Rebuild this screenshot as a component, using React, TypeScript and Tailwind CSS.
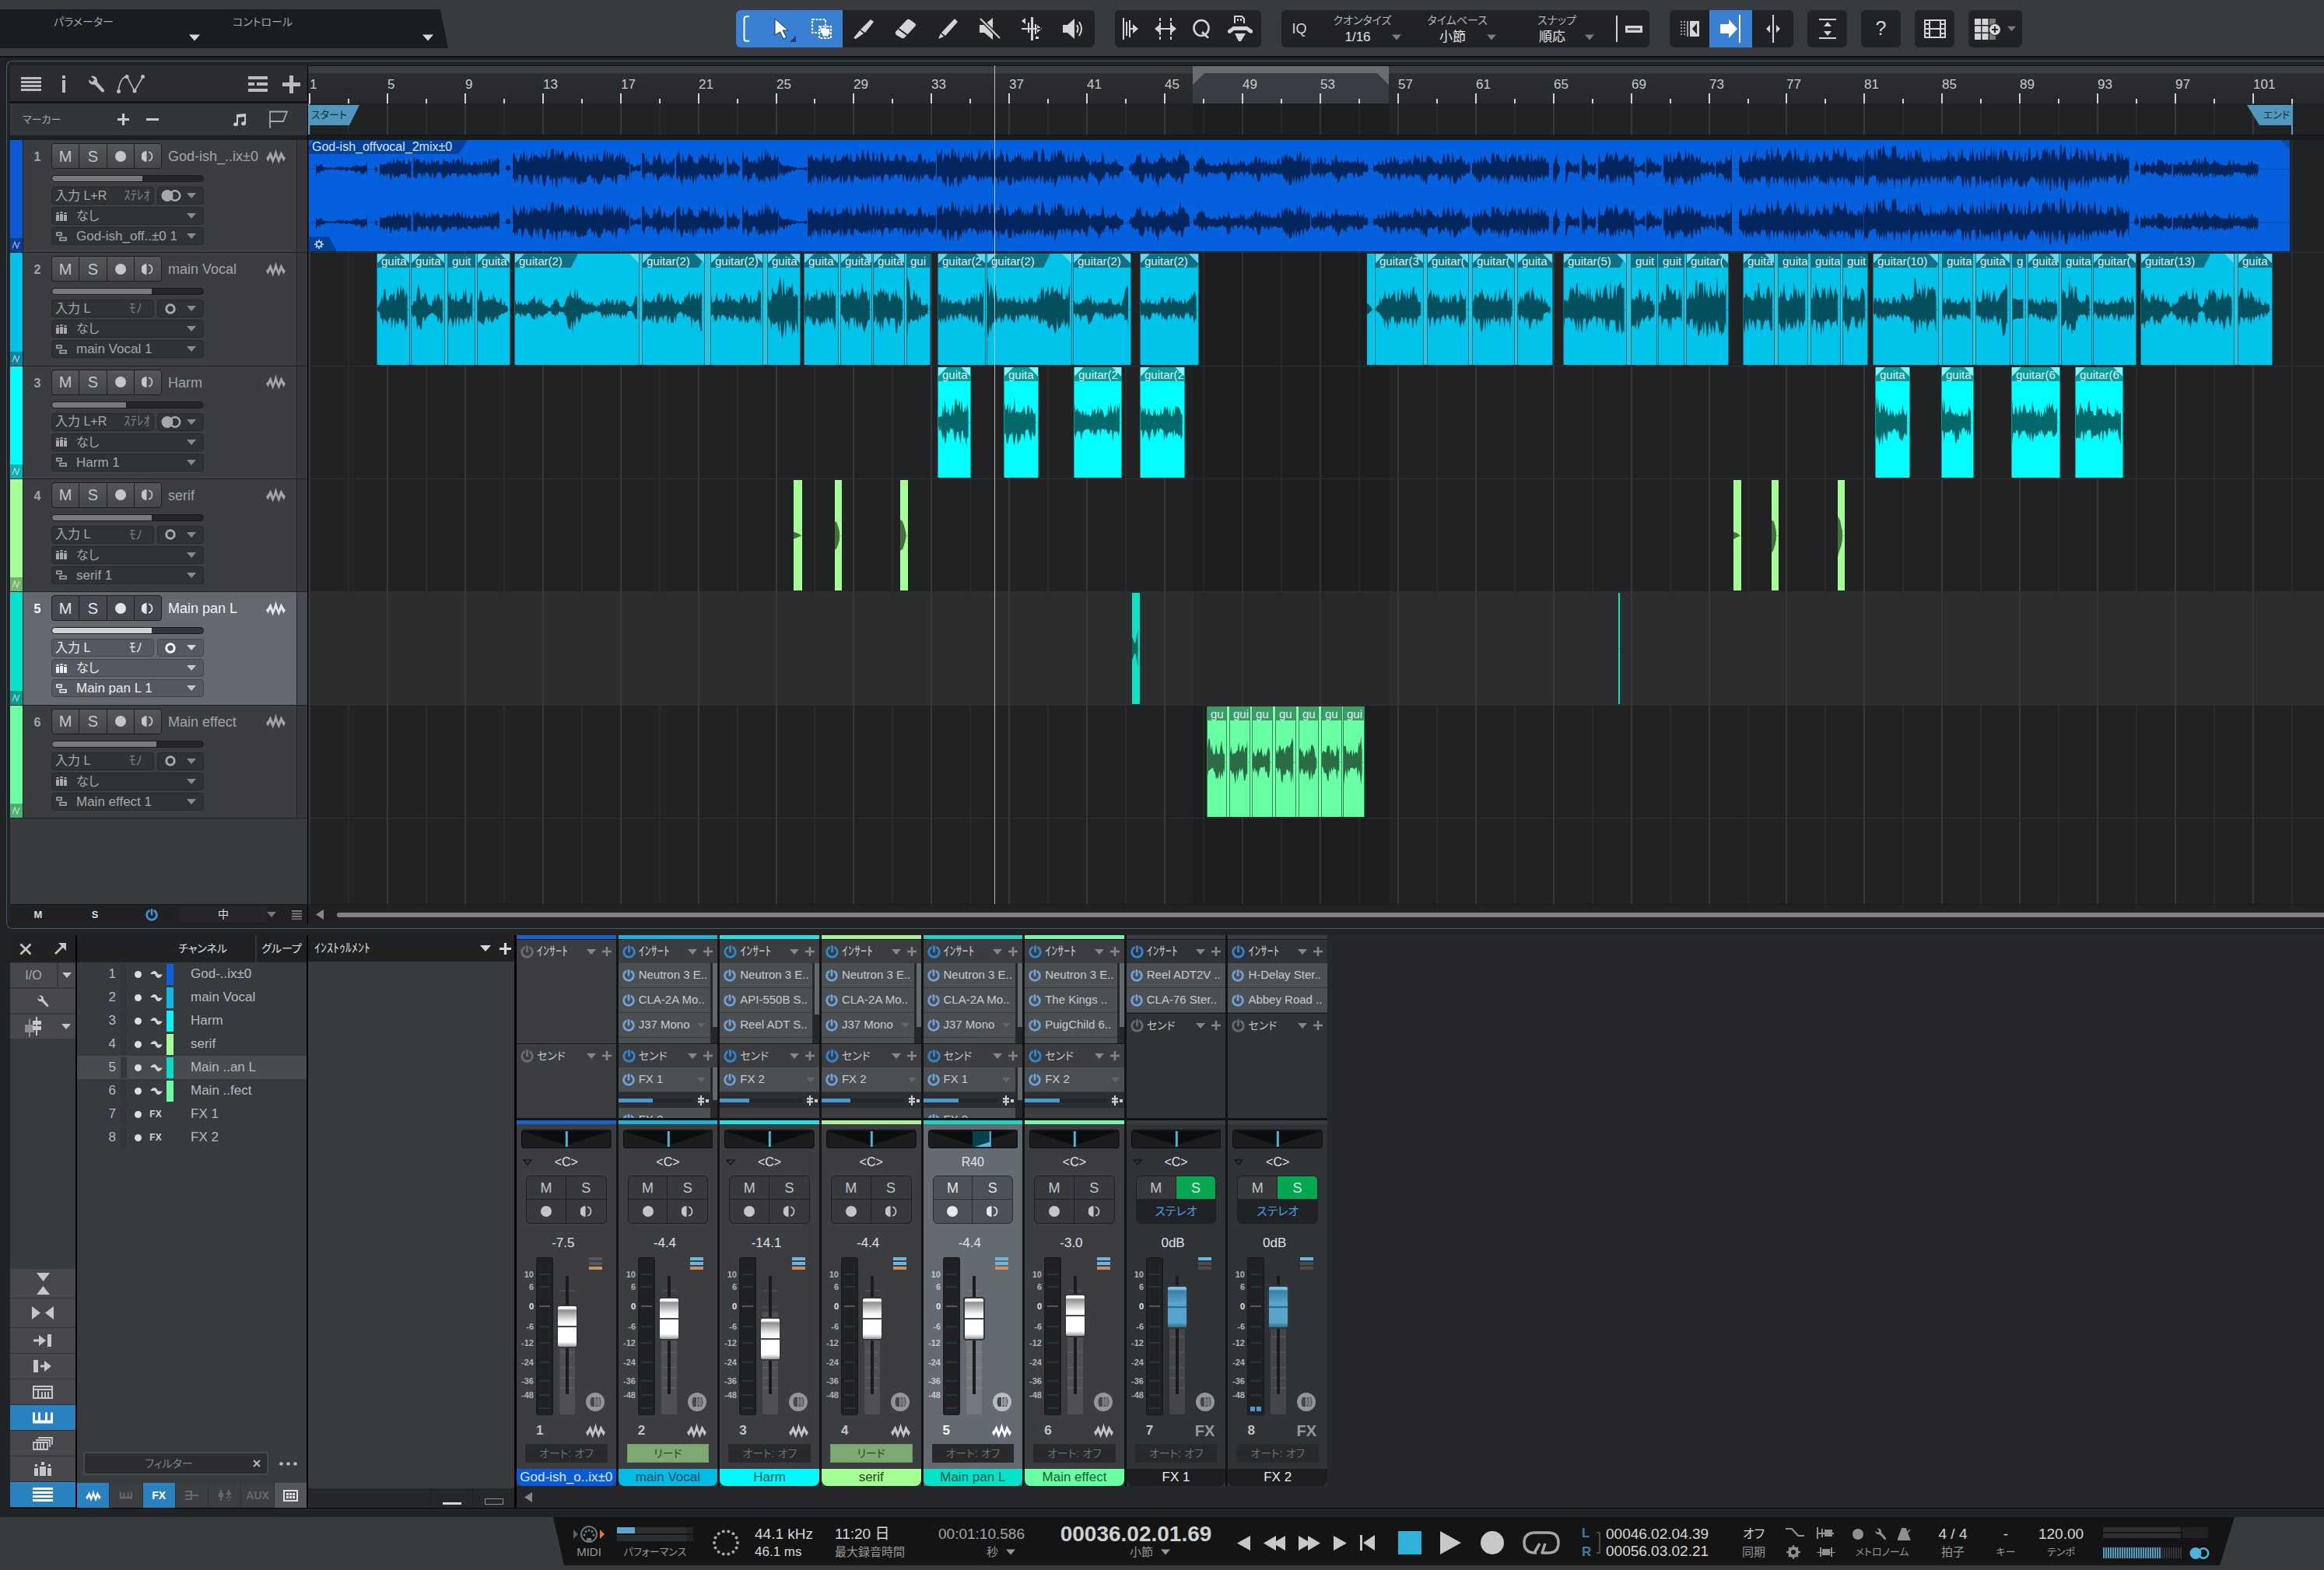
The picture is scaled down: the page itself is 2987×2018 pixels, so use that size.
import React from "react";

/* ---------- shared drawing helpers ---------- */

type IconProps = { w?: number; h?: number; box?: string; className?: string; children: React.ReactNode };

function Svg({ w = 24, h = 24, box, className = "", children }: IconProps) {
  return (
    <svg width={w} height={h} viewBox={box ?? `0 0 ${w} ${h}`} className={`shrink-0 ${className}`} fill="currentColor" aria-hidden="true">
      {children}
    </svg>
  );
}

const Down = ({ w = 14, h = 8, className = "" }: { w?: number; h?: number; className?: string }) => (
  <Svg w={w} h={h} box="0 0 14 8" className={className}>
    <path d="M0 0h14L7 8z" />
  </Svg>
);

const LeftArrow = ({ className = "" }: { className?: string }) => (
  <Svg w={10} h={13} className={className}>
    <path d="M10 0v13L0 6.500z" />
  </Svg>
);

const Plus = ({ s = 14, className = "" }: { s?: number; className?: string }) => (
  <Svg w={s} h={s} box="0 0 14 14" className={className}>
    <path d="M5.500 0h3v5.500H14v3H8.500V14h-3V8.500H0v-3h5.500z" />
  </Svg>
);

const Power = ({ s = 18, className = "" }: { s?: number; className?: string }) => (
  <Svg w={s} h={s} box="0 0 18 18" className={className}>
    <path d="M5 3a7.200 7.200 0 1 0 8 0" fill="none" stroke="currentColor" strokeWidth="3" strokeLinecap="round" />
    <path d="M9 1.500v7" fill="none" stroke="currentColor" strokeWidth="3" strokeLinecap="round" />
  </Svg>
);

const WaveIcon = ({ className = "" }: { className?: string }) => (
  <Svg w={25} h={20} box="0 0 26 20" className={className}>
    <path d="M0 12L2.500 9.500 6 3l3.500 9L13 0l3.500 12L20 3l3.500 6.500L26 12l-2.500 5L20.500 11 17 20 13 10 9 20 5.500 11l-3 6z" />
  </Svg>
);

const Monitor = ({ className = "" }: { className?: string }) => (
  <Svg w={15} h={14} className={className}>
    <path d="M6.500 0v14A7 7 0 0 1 6.500 0z" />
    <path d="M9 1.200a6 6 0 0 1 0 11.600" fill="none" stroke="currentColor" strokeWidth="1.700" />
  </Svg>
);

const Dot = ({ s = 14, className = "" }: { s?: number; className?: string }) => (
  <Svg w={s} h={s} box="0 0 14 14" className={className}>
    <circle cx="7" cy="7" r="7" />
  </Svg>
);

const Wrench = ({ s = 24, className = "" }: { s?: number; className?: string }) => (
  <Svg w={s} h={s} box="0 0 24 24" className={className}>
    <path d="M5 1c4-1 8 1 8.500 5 .2 1.500-.1 2.500.5 3.500l8.500 9.500c1.500 2-1 4.500-3 3L11 13c-1-.8-2-.6-3.500-.8C4 11.800 1.500 9 2.500 5.500L6.500 9 10 5.500z" />
  </Svg>
);

const Keys = ({ w = 26, h = 14, className = "" }: { w?: number; h?: number; className?: string }) => (
  <Svg w={w} h={h} box="0 0 26 14" className={className}>
    <path d="M0 0h3v10h4V0h3v10h6V0h3v10h4V0h3v14H0z" />
  </Svg>
);

const StereoRings = ({ className = "" }: { className?: string }) => (
  <Svg w={26} h={15} className={className}>
    <circle cx="8" cy="7.500" r="7.500" />
    <circle cx="18" cy="7.500" r="6.200" fill="none" stroke="currentColor" strokeWidth="2.600" />
  </Svg>
);

const MonoRing = ({ className = "" }: { className?: string }) => (
  <Svg w={14} h={14} className={className}>
    <circle cx="7" cy="7" r="5.200" fill="none" stroke="currentColor" strokeWidth="3" />
  </Svg>
);

/* ---------- wave forms ---------- */

function makeRandom(seed: number) {
  let s = (seed * 2654435761) % 4294967296;
  return () => {
    s = (s * 1664525 + 1013904223) % 4294967296;
    return s / 4294967296;
  };
}

/* Builds a closed outline from an envelope of half heights. */
function wavePath(x0: number, x1: number, env: number[], mid: number, seed: number, rough = 0.5) {
  const rnd = makeRandom(seed + 11);
  const top: string[] = [];
  const bottom: string[] = [];
  for (let x = x0; x <= x1; x += 1.5) {
    const t = ((x - x0) / Math.max(1, x1 - x0)) * (env.length - 1);
    const i = Math.min(env.length - 2, Math.floor(t));
    const a = env[i] + (env[i + 1] - env[i]) * (t - i);
    const up = a * (1 - rough + rough * Math.pow(rnd(), 1.6) * 1.7);
    const dn = a * (1 - rough + rough * Math.pow(rnd(), 1.6) * 1.5);
    top.push(`${x.toFixed(1)} ${(mid - up).toFixed(1)}`);
    bottom.unshift(`${x.toFixed(1)} ${(mid + dn).toFixed(1)}`);
  }
  return `M${top.join("L")}L${bottom.join("L")}Z`;
}

/* ---------- timeline data ---------- */

const ORIGIN = 396;
const BAR = 25;
const barX = (bar: number) => 1 + ((bar - 1) * BAR * 2498) / 2500;

type Clip = { a: number; b: number; label?: string; env: number[]; join?: boolean };
const c = (a: number, b: number, label: string, env: number[], join = false): Clip => ({ a, b, label, env, join });

const vocal: Clip[] = [
  c(484, 527, "guita", [1, 26, 20, 24, 22], true),
  c(528, 572, "guita", [4, 26, 20, 6, 18, 20], true),
  c(575, 611, "guit", [24, 20, 18, 28, 16, 20], true),
  c(613, 656, "guita", [16, 22, 18, 20, 12, 2]),
  c(661, 822, "guitar(2)", [12, 11, 10, 13, 12, 2, 12, 3, 30, 22, 10, 9, 3, 12, 10, 9, 12, 3, 15], true),
  c(825, 906, "guitar(2)", [20, 15, 18, 14, 20, 6, 18, 26, 24], true),
  c(913, 981, "guitar(2)", [16, 17, 16, 14, 18, 17, 20], true),
  c(986, 1029, "guita", [16, 28, 32, 30, 31]),
  c(1033, 1078, "guita", [18, 20, 24, 20, 28], true),
  c(1080, 1121, "guita", [14, 22, 21, 26, 20], true),
  c(1122, 1163, "guita", [14, 26, 20, 28, 18], true),
  c(1165, 1196, "gui", [34, 22, 16, 10, 7]),
  c(1205, 1267, "guitar(2", [16, 14, 13, 10, 16, 22], true),
  c(1268, 1378, "guitar(2)", [32, 22, 12, 16, 14, 13, 24, 26, 27, 26], true),
  c(1379, 1454, "guitar(2)", [8, 15, 16, 6, 14, 12, 8, 30]),
  c(1465, 1541, "guitar(2)", [9, 15, 9, 14, 12, 14, 8, 24]),
  c(1757, 1766, "", [8, 1], true),
  c(1767, 1830, "guitar(3", [1, 24, 20, 22, 24, 18], true),
  c(1834, 1888, "guitar(", [24, 18, 15, 18, 24], true),
  c(1892, 1947, "guitar(", [16, 25, 16, 24, 20], true),
  c(1950, 1996, "guita", [12, 20, 24, 14, 4]),
  c(2009, 2091, "guitar(5)", [20, 24, 26, 20, 26, 30, 27], true),
  c(2096, 2130, "guit", [22, 26, 14, 18, 6], true),
  c(2131, 2165, "guit", [13, 24, 26, 18, 24], true),
  c(2167, 2222, "guitar(", [24, 28, 32, 32, 32]),
  c(2240, 2281, "guita", [28, 24, 26, 22], true),
  c(2285, 2324, "guita", [30, 22, 27, 24], true),
  c(2327, 2366, "guita", [26, 30, 24, 28], true),
  c(2368, 2401, "guit", [30, 20, 22, 24]),
  c(2407, 2492, "guitar(10)", [10, 14, 13, 16, 32, 26, 28], true),
  c(2496, 2536, "guita", [12, 14, 11, 15], true),
  c(2539, 2584, "guita", [14, 22, 16, 24, 34], true),
  c(2586, 2604, "g", [14, 12, 14], true),
  c(2606, 2647, "guita", [14, 11, 16, 12], true),
  c(2649, 2689, "guita", [24, 32, 14, 16], true),
  c(2690, 2746, "guitar(", [10, 14, 10, 14, 12, 15]),
  c(2751, 2872, "guitar(13)", [28, 15, 18, 17, 3, 20, 18, 24, 2, 24, 16, 23, 18], true),
  c(2876, 2921, "guita", [20, 22, 18, 10, 6]),
];

const harm: Clip[] = [
  c(1205, 1248, "guita", [6, 24, 12, 26, 22, 26]),
  c(1290, 1335, "guita", [22, 24, 27, 18, 26]),
  c(1380, 1442, "guitar(2", [20, 20, 14, 21, 12, 22, 20]),
  c(1465, 1523, "guitar(2", [18, 21, 14, 20, 16, 20]),
  c(2410, 2455, "guita", [28, 26, 20, 10, 20, 21]),
  c(2495, 2537, "guita", [24, 20, 22, 10, 20]),
  c(2585, 2648, "guitar(6", [22, 18, 22, 12, 22, 18]),
  c(2667, 2729, "guitar(6", [18, 22, 20, 22, 12, 24]),
];

const serif: Clip[] = [
  c(1020, 1031, "", [5, 3, 1]),
  c(1073, 1082, "", [20, 16, 1]),
  c(1157, 1167, "", [22, 18, 1]),
  c(2228, 2238, "", [5, 3, 1]),
  c(2277, 2286, "", [22, 17, 1]),
  c(2362, 2371, "", [28, 18, 1]),
];

const panL: Clip[] = [c(1455, 1465, "", [16, 4, 28]), c(2080, 2082, "", [1, 1])];

const effect: Clip[] = [
  c(1551, 1577, "gu", [26, 16, 22, 18], true),
  c(1580, 1607, "gui", [16, 24, 15, 28], true),
  c(1609, 1636, "gu", [12, 18, 10, 24], true),
  c(1639, 1666, "gu", [14, 22, 20, 28], true),
  c(1669, 1695, "gu", [20, 14, 22, 10], true),
  c(1698, 1725, "gu", [14, 22, 12, 26], true),
  c(1726, 1754, "gui", [26, 12, 16, 28]),
];

/* [start, end, envelope...] for the stereo backing track */
const backing: number[][] = [
  [406, 472, 8, 3, 1, 3, 2, 6, 8], [482, 486, 2, 5, 2], [488, 529, 11, 12, 10], [531, 642, 12, 10, 12, 9, 11],
  [650, 657, 2, 6, 1], [659, 810, 18, 17, 22, 17, 19, 16], [810, 824, 6, 3, 6], [825, 867, 20, 8, 18, 8, 18],
  [869, 931, 16, 18, 14, 18, 6], [934, 951, 18, 6, 14, 4], [954, 1001, 22, 12, 22, 14], [1001, 1022, 10, 7, 2],
  [1022, 1038, 2, 1, 3], [1038, 1204, 18, 16, 20, 15, 17, 14], [1204, 1381, 21, 18, 20, 17, 20, 18],
  [1381, 1445, 10, 20, 9, 20, 8, 18, 1], [1451, 1530, 3, 18, 10, 22, 8, 22, 3], [1534, 1600, 4, 13, 8, 6, 13, 7, 9],
  [1600, 1685, 5, 14, 8, 15, 20, 15], [1685, 1759, 9, 12, 9, 18, 8, 14, 3], [1765, 1890, 5, 14, 11, 17, 12, 18, 6],
  [1892, 1992, 16, 14, 18, 16, 18, 10], [1996, 2006, 16, 14, 2], [2012, 2030, 16, 4, 8], [2033, 2051, 18, 5, 8],
  [2054, 2101, 16, 18, 16, 20], [2101, 2115, 6, 3, 8], [2116, 2136, 16, 7, 5], [2138, 2186, 20, 18, 20, 16],
  [2186, 2205, 10, 7], [2205, 2226, 10, 13, 22], [2235, 2396, 18, 20, 22, 18, 21, 17], [2396, 2737, 20, 22, 18, 22, 20, 24, 20, 19],
  [2743, 2749, 3, 8, 3], [2751, 2792, 9, 7, 10, 6], [2793, 2903, 10, 9, 12, 9, 10, 9],
];

function BackingClip() {
  return (
    <button aria-label="God-ish_offvocal_2mix±0" className="absolute top-0 bottom-px left-px w-[2546px] overflow-hidden bg-[#0460dc] text-left">
      <svg className="absolute inset-0 h-full w-full" viewBox="0 0 2546 144" preserveAspectRatio="none" aria-hidden="true">
        {[37, 106].map((mid) => (
          <g key={mid} fill="#03265e">
            <path d={`M0 ${mid}h2546v1H0z`} opacity=".35" />
            {backing.map(([a, b, ...env], i) => (
              <path key={a} d={wavePath(a - 397, b - 397, env, mid, i + 3, 0.58)} />
            ))}
          </g>
        ))}
      </svg>
      <span className="absolute top-0 left-0 h-[18px] bg-[#04419a] pr-5 pl-1 text-[16px] leading-[18px] whitespace-nowrap text-[#d5e4f6] [clip-path:polygon(6px_0,100%_0,calc(100%-12px)_100%,0_100%,0_8px)]">
        God-ish_offvocal_2mix±0
      </span>
      <span className="absolute bottom-0 left-0 flex h-[19px] w-[36px] items-center bg-[#04419a] pl-[7px] text-[#c8daf2] [clip-path:polygon(0_0,26px_0,100%_100%,0_100%)]">
        <Svg w={12} h={12}>
          <circle cx="6" cy="6" r="3.200" fill="none" stroke="currentColor" strokeWidth="1.600" />
          <path d="M6 0v2M6 10v2M0 6h2M10 6h2M2 2l1.200 1.200M8.800 8.800L10 10M10 2L8.800 3.200M3.200 8.800L2 10" stroke="currentColor" strokeWidth="1.600" />
        </Svg>
      </span>
      <i className="absolute top-0 right-0 h-3 w-3 bg-[#0b4aa8] [clip-path:polygon(0_0,100%_0,100%_100%)]" />
    </button>
  );
}

type Theme = { body: string; wave: string; head: string; corner: string; edge: string; gap: string };

const themes: Record<string, Theme> = {
  vocal: { body: "bg-[#02c4ea]", wave: "#05505f", head: "bg-[#0c7186]", corner: "bg-[#66d6ee]", edge: "border-[#0a6e82]", gap: "bg-[#2cc3dd]" },
  harm: { body: "bg-[#02fefe]", wave: "#04696b", head: "bg-[#0a9a9c]", corner: "bg-[#7df6f6]", edge: "border-[#0a9a9c]", gap: "bg-[#02fefe]" },
  serif: { body: "bg-[#a5ff96]", wave: "#47703f", head: "bg-[#6aa960]", corner: "bg-[#c5ffba]", edge: "border-[#7fc872]", gap: "bg-[#a5ff96]" },
  pan: { body: "bg-[#0be3c6]", wave: "#0a6a60", head: "bg-[#0a9c8a]", corner: "bg-[#7af0e0]", edge: "border-[#0bbfa8]", gap: "bg-[#0be3c6]" },
  effect: { body: "bg-[#69ffa3]", wave: "#2b6c46", head: "bg-[#3f9a66]", corner: "bg-[#9dffc4]", edge: "border-[#2f8a56]", gap: "bg-[#7dffb2]" },
};

function Lane({ clips, theme, seed }: { clips: Clip[]; theme: Theme; seed: number }) {
  return (
    <>
      {clips.map((k, i) => {
        const w = k.b - k.a;
        const next = clips[i + 1];
        const mid = 72;
        const inset = k.label === "gu" || k.label === "gui" ? "pl-1" : "pl-[5px]";
        return (
          <React.Fragment key={k.a}>
            {k.join && next && (
              <div className={`absolute top-px bottom-px ${theme.gap}`} style={{ left: k.b - ORIGIN, width: next.a - k.b }} />
            )}
            <button
              aria-label={k.label || "clip"}
              className={`absolute top-px bottom-px overflow-hidden text-left ${w > 17 ? "border-x" : ""} ${theme.edge} ${theme.body}`}
              style={{ left: k.a - ORIGIN, width: w }}
            >
              <svg className="absolute inset-0 h-full w-full" viewBox={`0 0 ${w} 144`} preserveAspectRatio="none" aria-hidden="true">
                <path d={`M0 ${mid}h${w}v1H0z`} fill={theme.wave} opacity=".4" />
                <path d={wavePath(0, w - 2, k.env, mid, seed + i, w > 20 ? 0.55 : 0.1)} fill={theme.wave} />
              </svg>
              {k.label && (
                <>
                  <span
                    className={`absolute top-0 left-0 h-[18px] text-[15px] leading-[20px] whitespace-nowrap text-[#d9f4f5] ${inset} ${theme.head} ${w > 70 ? "pr-5 [clip-path:polygon(0_0,100%_0,calc(100%-9px)_100%,0_100%)]" : "w-full"}`}
                  >
                    {k.label}
                  </span>
                  {w > 40 && (
                    <>
                      <i className={`absolute top-0 left-0 h-3 w-3 ${theme.corner} [clip-path:polygon(0_0,100%_0,0_100%)]`} />
                      <i className={`absolute top-0 right-0 h-3 w-3 ${theme.corner} [clip-path:polygon(0_0,100%_0,100%_100%)]`} />
                    </>
                  )}
                </>
              )}
            </button>
          </React.Fragment>
        );
      })}
    </>
  );
}

/* ---------- top tool bar ---------- */

const toolBtn = "flex h-12 items-center justify-center";
const group = "flex h-12 items-center rounded-md bg-[#202225] text-[#d2d4d6]";

function ToolSelect({ label, value, className }: { label: string; value: string; className: string }) {
  return (
    <label className={`flex flex-col items-center ${className}`}>
      <span className="text-[14px] leading-[22px] text-[#b4b6b8]">{label}</span>
      <span className="flex w-full items-center">
        <select className="min-w-0 flex-1 appearance-none text-center text-[17px] leading-[22px] text-[#e4e5e6]" defaultValue={value}>
          <option className="bg-[#202225]">{value}</option>
        </select>
        <Down w={12} h={8} className="text-[#797c80]" />
      </span>
    </label>
  );
}

function TopBar() {
  return (
    <header className="flex h-[74px] shrink-0 items-start border-b-2 border-[#0e0f10] bg-[#373a3f]">
      <div className="mt-3 flex h-[50px] w-[576px] bg-[#191c20] text-[14px] text-[#a4a7ab] [clip-path:polygon(0_0,566px_0,100%_100%,0_100%)]">
        <button className="flex w-[264px] items-start justify-between pt-1.5 pr-[7px] pl-[69px]">
          <span>パラメーター</span>
          <Down w={14} h={9} className="mt-[26px] text-[#d6d8da]" />
        </button>
        <button className="flex w-[300px] items-start justify-between pt-1.5 pr-[7px] pl-[35px]">
          <span>コントロール</span>
          <Down w={14} h={9} className="mt-[26px] text-[#d6d8da]" />
        </button>
      </div>

      <div className="mt-[13px] ml-[370px] flex">
        <div className={`${group} overflow-hidden`}>
          <button aria-label="Arrow tool" className={`${toolBtn} w-[82px] justify-start gap-8 bg-[#3a80d2] pl-[9px] text-white`}>
            <Svg w={8} h={34}>
              <path d="M8 1.200H4.500Q1.500 1.200 1.500 4.500v25q0 3.300 3 3.300H8" fill="none" stroke="currentColor" strokeWidth="2" />
            </Svg>
            <Svg w={28} h={34}>
              <path d="M1 4l17 15h-7l5 9-4 2-4.500-9L1 25z" stroke="#1c2f4a" />
              <path d="M28 26v8h-8z" fill="#1d3f70" />
            </Svg>
          </button>
          <button aria-label="Range tool" className={`${toolBtn} w-[55px] bg-[#3a80d2] text-white`}>
            <Svg w={28} h={28}>
              <g fill="none" stroke="currentColor" strokeWidth="2" strokeDasharray="3 1.500">
                <path d="M2 2h17v17H2z" />
                <path d="M11 11h15v15H11z" />
              </g>
              <path d="M12 12l4 1.500L18 12l2 2h4v4l2 2-3 1-1 3-3-1-3 1-1-3-2-3z" />
            </Svg>
          </button>
          {toolIcons.map(([name, icon], i) => (
            <button key={i} aria-label={name} className={`${toolBtn} w-[54px]`}>
              {icon}
            </button>
          ))}
        </div>

        <div className={`${group} ml-[26px] w-[188px] justify-around`}>
          <button aria-label="Strip silence" className={toolBtn}>
            <Svg w={20} h={28}>
              <path d="M0 0h2v28H0zM4 5h2v18H4zM8 3h2v22H8zM10 13h3V8l7 6-7 6v-5h-3z" />
            </Svg>
          </button>
          <button aria-label="Stretch" className={toolBtn}>
            <Svg w={28} h={28}>
              <path d="M6 0h2v4H6zM6 6h2v16H6zM6 24h2v4H6zM20 0h2v4h-2zM20 6h2v16h-2zM20 24h2v4h-2zM0 14l6-5v4h16V9l6 5-6 5v-4H6v4z" />
            </Svg>
          </button>
          <button aria-label="Quantize" className={toolBtn}>
            <Svg w={24} h={26}>
              <ellipse cx="12" cy="12" rx="9.500" ry="10" fill="none" stroke="currentColor" strokeWidth="2.600" />
              <path d="M14 16l8 8-2 1.500-8-7z" />
            </Svg>
          </button>
          <button aria-label="Humanize" className={toolBtn}>
            <Svg w={34} h={34}>
              <path d="M10 10V1h9l3 3v6M14 4v3M18 4v3" fill="none" stroke="currentColor" strokeWidth="2" />
              <path d="M1 22v-3l7-5h18l7 5v3l-3 1-5-4H9l-5 4zM10 23h14l-6 10h-3z" />
            </Svg>
          </button>
        </div>

        <div className={`${group} ml-[26px] w-[473px]`}>
          <button className="w-[46px] text-center text-[18px]">IQ</button>
          <ToolSelect label="クオンタイズ" value="1/16" className="ml-2 w-[100px]" />
          <ToolSelect label="タイムベース" value="小節" className="ml-[22px] w-[100px]" />
          <ToolSelect label="スナップ" value="順応" className="ml-[30px] w-[96px]" />
          <button aria-label="Autoscroll" className={`${toolBtn} ml-7 gap-2.5`}>
            <i className="h-[34px] w-0.5 bg-[#d2d4d6]" />
            <Svg w={22} h={9}>
              <path d="M1.500 1.500h19v6h-19z" fill="#55585c" stroke="currentColor" strokeWidth="3" />
            </Svg>
          </button>
        </div>

        <div className={`${group} ml-[26px] overflow-hidden`}>
          <button aria-label="Return to start" className={`${toolBtn} w-[51px]`}>
            <Svg w={24} h={20}>
              <path d="M0 0h2v2H0zM0 4h2v2H0zM0 8h2v2H0zM0 12h2v2H0zM0 16h2v2H0zM4 0h2v2H4zM4 4h2v2H4zM4 8h2v2H4zM4 12h2v2H4zM4 16h2v2H4zM8 0h2v20H8z" opacity=".7" />
              <path fillRule="evenodd" d="M12 0h12v20H12zm9 3l-6 7 6 7z" />
            </Svg>
          </button>
          <button aria-label="Follow cursor" className={`${toolBtn} w-[55px] bg-[#3a80d2] text-white`}>
            <Svg w={28} h={36}>
              <path d="M0 12h11V6l11 12-11 12v-6H0zM24 0h2v36h-2z" />
            </Svg>
          </button>
          <button aria-label="Cursor edit" className={`${toolBtn} w-[53px]`}>
            <Svg w={20} h={36}>
              <path d="M9 0h2v36H9zM6 13v10l-5-5zM14 13v10l5-5z" />
            </Svg>
          </button>
        </div>

        <div className={`${group} ml-[18px]`}>
          <button aria-label="Expand height" className={`${toolBtn} w-[51px]`}>
            <Svg w={22} h={26}>
              <path d="M0 0h22v2H0zM0 24h22v2H0zM11 4l5 6H6zM11 22l5-6H6z" />
            </Svg>
          </button>
        </div>
        <div className={`${group} ml-[18px]`}>
          <button className={`${toolBtn} w-[51px] text-[25px]`}>?</button>
        </div>
        <div className={`${group} ml-[18px]`}>
          <button aria-label="Video" className={`${toolBtn} w-[51px]`}>
            <Svg w={28} h={24}>
              <path d="M1 1h26v22H1zM7 1v22M21 1v22M7 12h14M1 6h6M1 12h6M1 18h6M21 6h6M21 12h6M21 18h6" fill="none" stroke="currentColor" strokeWidth="2" />
            </Svg>
          </button>
        </div>
        <div className={`${group} ml-[18px]`}>
          <button aria-label="Add grid view" className={`${toolBtn} w-[69px] gap-2`}>
            <Svg w={34} h={27}>
              <path d="M0 0h8v8H0zM0 9.500h8v8H0zM0 19h8v8H0zM9.500 0h8v8h-8zM9.500 9.500h8v8h-8zM9.500 19h8v8h-8z" />
              <path d="M19 0h8v8h-8zM19 9.500h8v8h-8zM19 19h8v8h-8z" opacity=".5" />
              <circle cx="26" cy="14" r="7.500" stroke="#202225" />
              <path d="M26 10v8M22 14h8" stroke="#202225" strokeWidth="2" />
            </Svg>
            <Down w={11} h={8} className="text-[#797c80]" />
          </button>
        </div>
      </div>
    </header>
  );
}

const toolIcons: [string, React.ReactNode][] = [
  ["Split tool", <Svg w={26} h={26}><path d="M22 1l4 3-11 14-6-4zM8 15l5 4-10 7-3-1z" /></Svg>],
  ["Eraser tool", <Svg w={28} h={26}><path d="M1 17L15 2q2-2 4-1l7 5q2 2 0 4L13 24q-2 2-4 1l-7-4q-2-2-1-4z" /><path d="M5 13l11 8" stroke="#202225" strokeWidth="2" /></Svg>],
  ["Paint tool", <Svg w={26} h={26}><path d="M22 0l4 4L10 22l-5-4zM4 19l4 4-7 3z" /></Svg>],
  ["Mute tool", <Svg w={28} h={28}><path d="M1 9h6l11-9v28L7 19H1z" /><path d="M3 2l24 24" stroke="#202225" strokeWidth="5" /><path d="M2 1l25 25" stroke="currentColor" strokeWidth="2" /></Svg>],
  ["Bend tool", <Svg w={26} h={30}><path d="M12 0h3v30h-3zM8 7h2v13H8zM17 9h2v13h-2zM0 5l5-4v8zM0 14h26v2H0zM26 15l-6-5v10zM18 25h4v3h-4z" /></Svg>],
  ["Listen tool", <Svg w={28} h={26}><path d="M0 8h6l9-8v26l-9-8H0z" /><path d="M18 8q3 5 0 10M21 4q6 9 0 18" fill="none" stroke="currentColor" strokeWidth="2" /></Svg>],
];

/* ---------- track list ---------- */

type Track = {
  n: number; short: string; out: string; stereo?: boolean; vol: number; color: string; dark: string; sel?: boolean;
};

const tracks: Track[] = [
  { n: 1, short: "God-ish_..ix±0", out: "God-ish_off..±0 1", stereo: true, vol: 60, color: "bg-[#0b5ad4]", dark: "bg-[#0a3f94]" },
  { n: 2, short: "main Vocal", out: "main Vocal  1", vol: 66, color: "bg-[#02c0e8]", dark: "bg-[#0b86a2]" },
  { n: 3, short: "Harm", out: "Harm 1", stereo: true, vol: 49, color: "bg-[#02fbfd]", dark: "bg-[#0fb0b3]" },
  { n: 4, short: "serif", out: "serif 1", vol: 66, color: "bg-[#a6ff94]", dark: "bg-[#77b56c]" },
  { n: 5, short: "Main pan L", out: "Main pan L 1", vol: 66, color: "bg-[#04e2ca]", dark: "bg-[#0a9e8f]" },
  { n: 6, short: "Main effect", out: "Main effect 1", vol: 69, color: "bg-[#69ffa2]", dark: "bg-[#4cb274]" },
].map((t) => ({ ...t, sel: t.n === 5 }));

function TrackHeader({ t }: { t: Track }) {
  const field = `flex h-[23px] items-center rounded-sm border ${t.sel ? "border-[#40454d] bg-[#535861] text-[#ececee]" : "border-[#27292c] bg-[#303336] text-[#a6a8aa]"}`;
  const msBtn = "flex flex-1 items-center justify-center border-r border-[#1e1f21] last:border-r-0";
  const fill = t.sel ? "#d0d2d6" : "#77797d";
  const rest = t.sel ? "#33363a" : "#23252a";
  return (
    <div className="flex min-h-0 border-b border-[#1d1f21]">
      <div className={`flex w-4 flex-col justify-end ${t.color}`}>
        <div className={`flex h-[18px] items-center justify-center text-white/60 ${t.dark}`}>
          <Svg w={12} h={10}>
            <path d="M1 9l3-8 3 8 3-8" fill="none" stroke="currentColor" strokeWidth="1.200" />
          </Svg>
        </div>
      </div>
      <div className={`flex flex-1 border-l border-[#1d1f21] ${t.sel ? "bg-[#646970]" : "bg-[#3b3d41]"}`}>
        <div className={`w-9 pt-2.5 text-center text-[16px] font-bold ${t.sel ? "text-white" : "text-[#a2a4a7]"}`}>{t.n}</div>
        <div className="flex flex-1 flex-col pt-1">
          <div className="flex items-center">
            <div className={`flex h-[33px] w-[142px] overflow-hidden rounded border border-[#1e1f21] text-[20px] ${t.sel ? "bg-[#44484f] text-[#e4e5e7]" : "bg-linear-to-b from-[#54565a] to-[#444649] text-[#c3c5c7]"}`}>
              <button className={msBtn}>M</button>
              <button className={msBtn}>S</button>
              <button aria-label="Record" className={msBtn}><Dot /></button>
              <button aria-label="Monitor" className={msBtn}><Monitor /></button>
            </div>
            <span className={`ml-2 pt-0.5 text-[18px] whitespace-nowrap ${t.sel ? "text-[#f0f1f2]" : "text-[#a2a4a7]"}`}>{t.short}</span>
            <WaveIcon className={`mr-[14px] ml-auto ${t.sel ? "text-[#e4e5e7]" : "text-[#a2a4a7]"}`} />
          </div>
          <input
            type="range"
            aria-label={`${t.short} volume`}
            defaultValue={t.vol}
            className="mt-2 h-[9px] w-[196px] appearance-none rounded-full border border-[#191a1c] [&::-webkit-slider-thumb]:h-0 [&::-webkit-slider-thumb]:w-0 [&::-webkit-slider-thumb]:appearance-none"
            style={{ background: `linear-gradient(90deg, ${fill} ${t.vol}%, ${rest} ${t.vol}%)` }}
          />
          <div className="mt-1.5 flex w-[196px] flex-col gap-[3px] text-[17px]">
            <div className="flex gap-1">
              <button className={`${field} w-[132px] justify-between px-1 text-[16px] whitespace-nowrap`}>
                <span>{t.stereo ? "入力 L+R" : "入力 L"}</span>
                <span className={`text-[17px] ${t.stereo ? "" : "mr-2.5"} ${t.sel ? "" : "text-[#7b7d80]"}`}>{t.stereo ? "ｽﾃﾚｵ" : "ﾓﾉ"}</span>
              </button>
              <button aria-label="Channel format" className={`${field} flex-1 justify-between pr-[9px] ${t.stereo ? "pl-1" : "pl-[9px]"} ${t.sel ? "text-white" : ""}`}>
                {t.stereo ? <StereoRings /> : <MonoRing />}
                <Down w={12} h={9} className="opacity-75" />
              </button>
            </div>
            <div className={`${field} pr-[9px] pl-[5px]`}>
              <Svg w={14} h={12}>
                <path d="M0 4h4v8H0zM5 3h4v9H5zM10 4h4v8h-4zM.500 1h3v2h-3zM5.500 0h3v2h-3zM10.500 1h3v2h-3z" />
              </Svg>
              <select aria-label="Instrument" className="ml-3 flex-1 appearance-none text-[16px] leading-[21px]"><option>なし</option></select>
              <Down w={12} h={9} className="opacity-75" />
            </div>
            <div className={`${field} pr-[9px] pl-[5px]`}>
              <Svg w={14} h={12}>
                <path d="M1 1h6v3.500H1zM5 7.500h8V11H5zM1 4.500h6M5 7.500h8" fill="none" stroke="currentColor" strokeWidth="1.600" />
              </Svg>
              <select aria-label="Output" className="ml-3 flex-1 appearance-none leading-[21px] whitespace-pre"><option>{t.out}</option></select>
              <Down w={12} h={9} className="opacity-75" />
            </div>
          </div>
        </div>
      </div>
      <div className={`w-3.5 border-l border-[#26282a] ${t.sel ? "bg-[#484b52]" : "bg-[#35373b]"}`} />
    </div>
  );
}

function TrackPanel() {
  return (
    <div className="flex w-[383px] shrink-0 flex-col border-r border-black bg-[#373a3e]">
      <div className="flex h-[49px] items-center border-b-3 border-[#121314] bg-[#2a2c2f] pt-0.5 pr-[9px] pl-[14px] text-[#b9bbbd]">
        <button aria-label="Menu"><Svg w={26} h={18}><path d="M0 0h26v3H0zM0 5h26v3H0zM0 10h26v3H0zM0 15h26v3H0z" /></Svg></button>
        <button aria-label="Info" className="ml-[26px]"><Svg w={6} h={22}><path d="M1 0h4v4H1zM1 6h4v16H1z" /></Svg></button>
        <button aria-label="Tools" className="ml-[27px]"><Wrench s={23} /></button>
        <button aria-label="Automation" className="ml-[15px]">
          <Svg w={36} h={24}>
            <path d="M2 22Q4 4 13 2L23 21 34 2" fill="none" stroke="currentColor" strokeWidth="1.600" />
            <circle cx="2.500" cy="21.500" r="2.500" /><circle cx="13" cy="2.500" r="2.500" /><circle cx="23" cy="21" r="2.500" /><circle cx="33.500" cy="2.500" r="2.500" />
          </Svg>
        </button>
        <button aria-label="Track layers" className="ml-auto"><Svg w={25} h={20}><path d="M0 0h25v4H0zM0 8h8v4H0zM11 8h14v4H11zM0 16h25v4H0z" /></Svg></button>
        <button aria-label="Add track" className="ml-[19px]"><Plus s={23} /></button>
      </div>
      <div className="flex h-[41px] items-center bg-[#32363a] pr-6 pl-4 text-[13px] text-[#a4a6a8]">
        <span className="w-[52px] whitespace-nowrap">マーカー</span>
        <button aria-label="Add marker" className="ml-[70px] text-[#c6c8ca]"><Plus s={15} /></button>
        <button aria-label="Remove marker" className="ml-[22px] text-[#c6c8ca]"><Svg w={16} h={3}><path d="M0 0h16v3H0z" /></Svg></button>
        <button aria-label="Note" className="ml-auto text-[#c6c8ca]">
          <Svg w={18} h={16}><path d="M5 1l12-1v12.500a3 2.500 0 1 1-2-2V4L7 5v8.500a3 2.500 0 1 1-2-2z" /></Svg>
        </button>
        <button aria-label="Flag" className="ml-7">
          <Svg w={26} h={24}><path d="M2 23V1.500h22L19 14H2" fill="none" stroke="currentColor" strokeWidth="1.800" /></Svg>
        </button>
      </div>
      <div className="h-1.5 bg-[#1a1f23]" />
      <div className="grid h-[872px] grid-rows-6">
        {tracks.map((t) => <TrackHeader key={t.n} t={t} />)}
      </div>
      <div className="flex-1" />
      <div className="flex h-[26px] items-center border-t border-[#17181a] bg-[#1f2123] text-[13px] text-[#dcdddf]">
        <button className="w-[72px] text-center font-bold">M</button>
        <button className="w-[74px] text-center font-bold">S</button>
        <button aria-label="Enable" className="flex w-[72px] justify-center text-[#3f95d8]"><Power s={16} /></button>
        <button className="w-[112px] bg-[#25272a] text-center text-[14px]">中</button>
        <button aria-label="Size" className="text-[#77797b]"><Down w={12} h={7} /></button>
        <button aria-label="List" className="ml-5 text-[#77797b]"><Svg w={13} h={12}><path d="M0 0h13v2H0zM0 3.500h13v2H0zM0 7h13v2H0zM0 10.500h13v1.500H0z" /></Svg></button>
      </div>
    </div>
  );
}

/* ---------- timeline ---------- */

const majors = Array.from({ length: 26 }, (_, i) => 1 + i * 4);
const halves = Array.from({ length: 52 }, (_, i) => 1 + i * 2);

function Timeline() {
  const lanes: [Clip[] | null, Theme | null][] = [
    [null, null], [vocal, themes.vocal], [harm, themes.harm], [serif, themes.serif], [panL, themes.pan], [effect, themes.effect],
  ];
  return (
    <div className="relative flex min-w-0 flex-1 flex-col overflow-hidden bg-[#202223]">
      <div className="relative h-[49px] shrink-0 border-t border-[#121314] bg-linear-to-b from-[#2e2f33] to-[#27282b] text-[17px] text-[#c9cbcc]">
        <div className="h-[9px] bg-[#3b3d43]" />
        <div className="absolute inset-y-0 left-[1137px] w-[252px] border-t-9 border-[#6a6c70] bg-[#383c43]">
          <i className="absolute top-0 left-0 h-[15px] w-[15px] bg-[#6a6c70] [clip-path:polygon(0_0,100%_0,0_100%)]" />
          <i className="absolute top-0 right-0 h-[15px] w-[15px] bg-[#6a6c70] [clip-path:polygon(0_0,100%_0,100%_100%)]" />
        </div>
        {halves.map((b) => (
          <i key={b} className={`absolute bottom-0 w-0.5 bg-[#d0d2d3] ${b % 4 === 1 ? "h-[13px]" : "h-[6px]"}`} style={{ left: Math.round(barX(b)) }} />
        ))}
        {majors.map((b) => (
          <span key={b} className="absolute top-3 leading-6" style={{ left: Math.round(barX(b)) + 1 }}>{b}</span>
        ))}
      </div>
      <div className="relative h-[41px] shrink-0 border-b border-[#121314]">
        {halves.map((b) => (
          <i key={b} className={`absolute inset-y-0 w-0.5 ${b % 4 === 1 ? "bg-[#36383a]" : "bg-[#2a2c2e]"}`} style={{ left: Math.round(barX(b)) }} />
        ))}
        <div className="absolute inset-y-0 left-[1137px] w-[252px] bg-black/10" />
        <i className="absolute inset-y-0 left-0 w-0.5 bg-[#5a9ec4]" />
        <span className="absolute top-0.5 left-0 h-[26px] w-[66px] bg-[#4f97bd] pl-1 text-[13px] leading-[26px] text-[#16303f] [clip-path:polygon(0_0,100%_0,calc(100%-13px)_100%,0_100%)]">スタート</span>
        <i className="absolute inset-y-0 left-[2549px] w-0.5 bg-[#5a9ec4]" />
        <span className="absolute top-0.5 left-[2492px] h-[26px] w-[59px] bg-[#4f97bd] pr-1 text-right text-[13px] leading-[26px] text-[#16303f] [clip-path:polygon(0_0,100%_0,100%_100%,16px_100%)]">エンド</span>
      </div>
      <div className="h-1.5 shrink-0 bg-[#171c20]" />
      <div className="relative flex flex-1 flex-col">
        <div className="absolute inset-x-0 top-[581px] h-[146px] bg-[#2b2d2e]" />
        {halves.map((b) => (
          <i key={b} className={`absolute inset-y-0 w-0.5 ${b % 4 === 1 ? "bg-[#36383a]" : "bg-[#2a2c2e]"}`} style={{ left: Math.round(barX(b)) }} />
        ))}
        <div className="absolute inset-y-0 left-[1137px] w-[252px] bg-black/10" />
        <div className="grid h-[872px] grid-rows-6">
          {lanes.map(([clips, theme], i) => (
            <div key={i} className="relative border-b border-[#2d2f31]">
              {clips && theme ? <Lane clips={clips} theme={theme} seed={i * 100} /> : <BackingClip />}
            </div>
          ))}
        </div>
      </div>
      <i className="absolute top-0 bottom-[26px] left-[882px] w-px bg-[#b9bcbe]" />
      <div className="flex h-[26px] shrink-0 items-center border-t border-[#17181a] bg-[#1f2123] pl-2.5">
        <button aria-label="Scroll left" className="text-[#85878a]"><LeftArrow /></button>
        <div className="ml-[17px] h-1.5 flex-1 rounded-l-full bg-[#818284]" />
      </div>
    </div>
  );
}

/* ---------- mixer: side controls and channel list ---------- */

const sideIcons: [string, React.ReactNode, string][] = [
  ["Narrow height", <Svg w={17} h={28}><path d="M0 0h17L8.500 11zM0 28h17L8.500 17z" /></Svg>, "h-[38px]"],
  ["Narrow width", <Svg w={28} h={17}><path d="M0 0v17l11-8.500zM28 0v17L17 8.500z" /></Svg>, "h-[38px]"],
  ["Inputs", <Svg w={24} h={16}><path d="M0 6.500h7V1l9 7-9 7V9.500H0zM18 0h5v16h-5z" /></Svg>, "h-[33px]"],
  ["Outputs", <Svg w={24} h={16}><path d="M0 0h6v16H0zM9 6.500h5V1l9 7-9 7V9.500H9z" /></Svg>, "h-[33px]"],
  ["External", <Svg w={26} h={17}><path d="M1 1h24v15H1zM1 5h24M7 5v11M12 8v8M16 8v8M20 8v8" fill="none" stroke="currentColor" strokeWidth="2" /></Svg>, "h-[33px]"],
  ["Instruments", <Keys w={26} h={17} />, "h-[33px]"],
  ["Banks", <Svg w={26} h={17}><path d="M1 7h18v9H1zM6 7v9M10 7v9M14 7v9M4 4h18v9M7 1h18v9" fill="none" stroke="currentColor" strokeWidth="1.800" /></Svg>, "h-[33px]"],
  ["Groups", <Svg w={22} h={18}><path d="M0 8h5v10H0zM7 6h8v12H7zM17 8h5v10h-5zM1 3h3v3H1zM9 0h4v4H9zM18 3h3v3h-3z" /></Svg>, "h-[33px]"],
  ["Channel list", <Svg w={26} h={18}><path d="M0 0h26v3H0zM0 5h26v3H0zM0 10h26v3H0zM0 15h26v3H0z" /></Svg>, "h-[33px]"],
];

function MixerSide() {
  return (
    <div className="flex w-[86px] shrink-0 flex-col border-r-2 border-black bg-[#373a3f] text-[#c4c6c8]">
      <div className="flex h-[35px] items-center justify-between bg-[#1f2123] px-3">
        <button aria-label="Close"><Svg w={16} h={16}><path d="M1.500 1.500l13 13M14.500 1.500l-13 13" stroke="currentColor" strokeWidth="2.600" /></Svg></button>
        <button aria-label="Detach"><Svg w={15} h={15}><path d="M1 14L11 4" stroke="currentColor" strokeWidth="2.600" /><path d="M5 0h10v10z" /></Svg></button>
      </div>
      <div className="mt-px flex h-[31px] bg-[#46484c]">
        <button className="flex-1 text-[16px] text-[#a9abad]">I/O</button>
        <button aria-label="I/O menu" className="flex w-6 items-center justify-center border-l-2 border-[#34363a]"><Down w={12} h={7} /></button>
      </div>
      <button aria-label="Setup" className="mt-0.5 flex h-[31px] items-center justify-center bg-[#46484c]"><Wrench s={16} /></button>
      <button aria-label="Console size" className="mt-0.5 flex h-[31px] items-center justify-between bg-[#46484c] pr-1.5 pl-[19px]">
        <Svg w={22} h={26}><path d="M5 3h2v23H5zM0 10h12v10H0z" opacity=".55" /><path d="M14 0h2v24h-2zM10 5h11v5H10zM10 12h11v5H10z" /></Svg>
        <Down w={12} h={7} />
      </button>
      <div className="flex-1" />
      {sideIcons.map(([name, icon, h]) => {
        const on = name === "Instruments" || name === "Channel list";
        return (
          <button key={name} aria-label={name} className={`flex shrink-0 items-center justify-center border-b border-[#2e3033] ${h} ${on ? "bg-[#2a82c0] text-white" : "bg-[#46484c]"}`}>
            {icon}
          </button>
        );
      })}
    </div>
  );
}

const rows: [number, string, string][] = [
  [1, "God-..ix±0", "bg-[#0f61d8]"], [2, "main Vocal", "bg-[#0cb8e0]"], [3, "Harm", "bg-[#08f4f8]"], [4, "serif", "bg-[#a6ff94]"],
  [5, "Main ..an L", "bg-[#08dcc6]"], [6, "Main ..fect", "bg-[#69ffa2]"], [7, "FX 1", ""], [8, "FX 2", ""],
];

function ChannelList() {
  const tab = "flex flex-1 items-center justify-center border-r border-[#303236] last:border-r-0";
  return (
    <div className="flex w-[297px] shrink-0 flex-col border-r-2 border-black bg-[#373a3f] text-[#b9bbbd]">
      <table className="w-full table-fixed border-collapse text-[17px]">
        <colgroup>
          <col className="w-[52px]" /><col className="w-3.5" /><col className="w-[22px]" /><col className="w-[26px]" /><col className="w-[116px]" /><col />
        </colgroup>
        <thead>
          <tr className="h-[35px] bg-[#1f2123] text-[14px] text-[#e0e1e2]">
            <th colSpan={5} className="border-r-2 border-[#33363a] pr-9 text-right font-normal">チャンネル</th>
            <th className="text-center font-normal whitespace-nowrap">グループ</th>
          </tr>
        </thead>
        <tbody>
          {rows.map(([n, name, color]) => (
            <tr key={n} className={`h-[30px] ${n === 5 ? "bg-[#484b4f]" : ""}`}>
              <td className="pr-0.5 text-right">{n}</td>
              <td className="p-0"><i className={`ml-1 block h-7 w-2 ${n === 5 ? "bg-[#36393c]" : "bg-[#33363a]"}`} /></td>
              <td className="p-0"><Dot s={9} className="ml-2 text-[#dddedf]" /></td>
              <td className="p-0 text-center text-[12px] font-bold text-[#d3d4d6]">
                {n < 7 ? (
                  <Svg w={16} h={9} className="ml-1.5"><path d="M0 4Q3 0 5.500 0T10 4.500h6Q13 9 10.500 9T6 4z" /></Svg>
                ) : "FX"}
              </td>
              <td className="p-0 whitespace-nowrap">
                <span className="flex items-center gap-[22px]">
                  <i className={`ml-px h-[27px] w-[9px] ${color}`} />
                  {name}
                </span>
              </td>
              <td />
            </tr>
          ))}
        </tbody>
      </table>
      <div className="flex-1" />
      <div className="mb-2.5 flex h-[30px] items-center pl-2">
        <div className="flex h-full w-[238px] items-center rounded border-2 border-[#48494d] bg-[#2b2d30] pr-2">
          <input aria-label="フィルター" placeholder="フィルター" className="min-w-0 flex-1 text-center text-[14px] outline-none placeholder:text-[#7f8184]" />
          <button aria-label="Clear"><Svg w={10} h={10}><path d="M1 1l8 8M9 1L1 9" stroke="currentColor" strokeWidth="2" /></Svg></button>
        </div>
        <button aria-label="More" className="ml-[14px]"><Svg w={23} h={5}><circle cx="2.500" cy="2.500" r="2.300" /><circle cx="11.500" cy="2.500" r="2.300" /><circle cx="20.500" cy="2.500" r="2.300" /></Svg></button>
      </div>
      <div className="flex h-8 bg-[#3c3e42] text-[14px] font-bold text-[#67696c]">
        <button aria-label="Audio" className={`${tab} bg-[#2a82c0] text-white`}><WaveIcon className="h-[15px] w-5" /></button>
        <button aria-label="Instrument" className={tab}><Keys w={16} h={12} /></button>
        <button className={`${tab} bg-[#2a82c0] text-white`}>FX</button>
        <button aria-label="Bus" className={tab}><Svg w={17} h={12}><path d="M0 1h8v10H0M0 6h17" fill="none" stroke="currentColor" strokeWidth="2" /></Svg></button>
        <button aria-label="VCA" className={tab}><Svg w={18} h={16}><path d="M3 1h2v14H3zM1 5h6v5H1zM13 1h2v14h-2zM14 2l4 5h-8zM14 14l4-4h-8z" /></Svg></button>
        <button className={tab}>AUX</button>
        <button aria-label="Grid" className={`${tab} bg-[#55575b] text-[#dfe0e1]`}>
          <Svg w={19} h={15}><path d="M1 1h17v13H1z" fill="none" stroke="currentColor" strokeWidth="2" /><path d="M4 4h3v3H4zM8 4h3v3H8zM12 4h3v3h-3zM4 8h3v3H4zM8 8h3v3H8zM12 8h3v3h-3z" /></Svg>
        </button>
      </div>
    </div>
  );
}

function InstrumentPanel() {
  return (
    <div className="flex w-[268px] shrink-0 flex-col border-r-3 border-black bg-[#373a3f] text-[#d6d7d8]">
      <div className="flex h-[34px] items-center bg-[#1f2123] pr-1 pl-2 text-[16px]">
        <span>ｲﾝｽﾄｩﾙﾒﾝﾄ</span>
        <button aria-label="Instrument menu" className="ml-auto"><Down w={14} h={8} /></button>
        <button aria-label="Add instrument" className="ml-[11px]"><Plus s={15} /></button>
      </div>
      <div className="flex-1" />
      <div className="flex h-[25px] justify-end bg-[#26272a]">
        <button aria-label="Small" className="flex w-[54px] items-end justify-center border-l border-[#1c1d1f] pb-1"><i className="h-[3px] w-6 bg-[#d6d7d8]" /></button>
        <button aria-label="Large" className="flex w-[54px] items-end justify-center border-l border-[#1c1d1f] pb-1"><i className="h-2 w-6 border border-[#8b8d90]" /></button>
      </div>
    </div>
  );
}

/* ---------- mixer: channel strips ---------- */

type Strip = {
  n: number; name: string; color: string; line: string; ink: string; inserts: string[]; send?: string; more?: string; sendLevel?: number;
  pan: string; db: string; cap: number; auto?: string; fx?: boolean; sel?: boolean; tri?: boolean;
};

const strips: Strip[] = [
  { n: 1, name: "God-ish_o..ix±0", color: "bg-[#0b5ad4]", line: "bg-[#1a62c6]", ink: "text-[#dce8fa]", inserts: [], pan: "<C>", db: "-7.5", cap: 37, tri: true },
  { n: 2, name: "main Vocal", color: "bg-[#04bbe6]", line: "bg-[#25aed2]", ink: "text-[#05485a]", inserts: ["Neutron 3 E..", "CLA-2A Mo..", "J37 Mono"], send: "FX 1", more: "FX 2", sendLevel: 38, pan: "<C>", db: "-4.4", cap: 27, auto: "リード" },
  { n: 3, name: "Harm", color: "bg-[#02f8fc]", line: "bg-[#27dfe3]", ink: "text-[#04585b]", inserts: ["Neutron 3 E..", "API-550B S..", "Reel ADT S.."], send: "FX 2", sendLevel: 28, pan: "<C>", db: "-14.1", cap: 53, tri: true },
  { n: 4, name: "serif", color: "bg-[#a6ff94]", line: "bg-[#aaf09c]", ink: "text-[#27481f]", inserts: ["Neutron 3 E..", "CLA-2A Mo..", "J37 Mono"], send: "FX 2", sendLevel: 27, pan: "<C>", db: "-4.4", cap: 27, auto: "リード" },
  { n: 5, name: "Main pan L", color: "bg-[#04e2ca]", line: "bg-[#22cfbd]", ink: "text-[#04534b]", inserts: ["Neutron 3 E..", "CLA-2A Mo..", "J37 Mono"], send: "FX 1", more: "FX 2", sendLevel: 39, pan: "R40", db: "-4.4", cap: 27, sel: true },
  { n: 6, name: "Main effect", color: "bg-[#69ffa2]", line: "bg-[#7bf0a8]", ink: "text-[#1b5a35]", inserts: ["Neutron 3 E..", "The Kings ..", "PuigChild 6.."], send: "FX 2", sendLevel: 34, pan: "<C>", db: "-3.0", cap: 23 },
  { n: 7, name: "FX 1", color: "bg-[#1c1e20]", line: "bg-[#3a3d42]", ink: "text-[#eceded]", inserts: ["Reel ADT2V ..", "CLA-76 Ster.."], pan: "<C>", db: "0dB", cap: 12, fx: true, tri: true },
  { n: 8, name: "FX 2", color: "bg-[#1c1e20]", line: "bg-[#3a3d42]", ink: "text-[#eceded]", inserts: ["H-Delay Ster..", "Abbey Road .."], pan: "<C>", db: "0dB", cap: 12, fx: true, tri: true },
];

function RackHead({ label, on, wide = false }: { label: string; on: boolean; wide?: boolean }) {
  return (
    <div className="flex h-[30px] shrink-0 items-center pr-1.5 pl-[5px] text-[#c4c6c8]">
      <button aria-label={`${label} on`}><Power s={17} className={on ? "text-[#2f87cf]" : "text-[#6a6c6f]"} /></button>
      <span className={`ml-1 whitespace-nowrap ${wide ? "text-[14px]" : "text-[16px]"}`}>{label}</span>
      <button aria-label={`${label} menu`} className="ml-auto text-[#85878a]"><Down w={12} h={7} /></button>
      <button aria-label={`${label} add`} className="ml-2 text-[#85878a]"><Plus s={12} /></button>
    </div>
  );
}

function RackRow({ name, plain = false }: { name: string; plain?: boolean }) {
  return (
    <div className="flex h-8 shrink-0 items-center border-b border-[#35383b] bg-[#4d5053] pl-[5px] text-[15px] text-[#c9cbcd]">
      <button aria-label={`${name} on`}><Power s={16} className="text-[#6ea3de]" /></button>
      <button className="ml-[5px] min-w-0 flex-1 text-left whitespace-nowrap">{name}</button>
      {(plain || name.length < 9) && <Down w={11} h={6} className="mr-1.5 text-[#65686b]" />}
    </div>
  );
}

const scale: [string, number][] = [["10", 22], ["6", 38], ["0", 63], ["-6", 89], ["-12", 110], ["-24", 135], ["-36", 159], ["-48", 177]];

function ChannelStrip({ s }: { s: Strip }) {
  const bg = s.sel ? "bg-[#646a72]" : s.fx ? "bg-[#2f3236]" : "bg-[#3b3d41]";
  const cell = `flex items-center justify-center ${s.sel ? "border-[#2b2d31]" : "border-[#1d1f21]"}`;
  const stack = s.fx ? ["#6cb6e0", "#4a4d51", "#544a48"] : s.n === 1 ? ["#54565a", "#54565a", "#c6925d"] : ["#6cb6e0", "#6cb6e0", "#c6925d"];
  return (
    <div className={`flex flex-col ${bg}`}>
      <div className={`h-[5px] ${s.line}`} />
      <div className={`flex h-[230px] flex-col overflow-hidden border-t border-[#17181a] ${s.fx ? "bg-[#2f3236]" : "bg-[#3b3d41]"}`}>
        <div className={`flex flex-col overflow-hidden ${s.fx ? "" : "h-[133px] shrink-0"}`}>
          <RackHead label="ｲﾝｻｰﾄ" on={s.n !== 1} />
          <div className="flex min-h-0 flex-1">
            <div className="min-w-0 flex-1">
              {s.inserts.map((x) => <RackRow key={x} name={x} />)}
              {!s.fx && s.inserts.length > 0 && <div className="h-3 bg-[#4d5053]" />}
            </div>
            {!s.fx && s.inserts.length > 0 && (
              <div className="w-[9px] bg-[#26282b] pl-[3px]"><div className={`w-1.5 bg-[#64676b] ${s.n === 3 ? "h-[66px]" : "h-[82px]"}`} /></div>
            )}
          </div>
        </div>
        <div className="flex min-h-0 flex-1 flex-col border-t border-[#17181a]">
          <RackHead label="センド" on={!!s.send} wide />
          {s.send && (
            <div className="flex min-h-0 flex-1">
              <div className="min-w-0 flex-1">
                <RackRow name={s.send} plain />
                <div className="flex h-5 items-center justify-between bg-[#2c2f32] pr-0.5">
                  <input
                    type="range"
                    aria-label={`${s.send} level`}
                    defaultValue={s.sendLevel}
                    className="h-[5px] min-w-0 flex-1 appearance-none [&::-webkit-slider-thumb]:h-0 [&::-webkit-slider-thumb]:w-0 [&::-webkit-slider-thumb]:appearance-none"
                    style={{ background: `linear-gradient(90deg, #4a97d0 ${(s.sendLevel ?? 0) + 8}%, #232528 ${(s.sendLevel ?? 0) + 8}%)` }}
                  />
                  <Svg w={14} h={13} className="ml-1.5 text-[#c9cbcd]"><path d="M3 0h2v13H3zM0 3h8v2.500H0zM0 7h8v2.500H0zM10 5h4v4h-4z" /></Svg>
                </div>
                {s.more && <RackRow name={s.more} plain />}
              </div>
              {s.more && <div className="w-[9px] bg-[#26282b] pl-[3px]"><div className="h-[42px] w-1.5 bg-[#64676b]" /></div>}
            </div>
          )}
        </div>
      </div>
      <div className="h-[3px] bg-[#111315]" />
      <div className={`h-[5px] ${s.line}`} />

      <svg className="mx-1.5 mt-[7px] h-6" viewBox="0 0 116 24" preserveAspectRatio="none" role="img" aria-label={`Pan ${s.pan}`}>
        <rect x=".5" y=".5" width="115" height="23" rx="3" fill="#1b1c1d" stroke="#0b0c0d" />
        <path d="M2 2h112L58 20z" fill="#0b0c0d" />
        {s.sel && <path d="M57 2h24v20H57z" fill="#07404f" />}
        {s.sel && <path d="M60 22l19-6V2h2v20z" fill="#55b8dc" />}
        {!s.sel && <path d="M57 2h3v20h-3z" fill="#4db2d8" />}
      </svg>
      <div className="relative flex h-[35px] items-center justify-center text-[16px] text-[#e3e4e5]">
        {s.tri && (
          <Svg w={12} h={8} className="absolute left-2"><path d="M1 1h10L6 7z" fill="none" stroke="#17181a" strokeWidth="1.500" /></Svg>
        )}
        {s.pan}
      </div>
      <div className={`mx-3 grid h-[62px] grid-cols-2 grid-rows-2 overflow-hidden rounded-md border text-[18px] ${s.sel ? "border-[#2b2d31] bg-[#4c5058] text-[#e6e7e9]" : "border-[#1d1f21] bg-[#37393d] text-[#c3c5c7]"}`}>
        <button className={`${cell} border-r border-b pt-0.5`}>M</button>
        <button className={`${cell} border-b pt-0.5 ${s.fx ? "bg-[#07a650] text-[#d9f5e4]" : ""}`}>S</button>
        {s.fx ? (
          <button className="col-span-2 flex items-center justify-center bg-[#202226] text-[15px] text-[#4a9fe0]">ステレオ</button>
        ) : (
          <>
            <button aria-label="Record" className={`${cell} border-r`}><Dot /></button>
            <button aria-label="Monitor" className={cell}><Monitor /></button>
          </>
        )}
      </div>
      <div className="flex h-[43px] items-center justify-center pt-1.5 pr-2 text-[17px] text-[#e0e1e3]">{s.db}</div>
      <div className="flex h-[204px]">
        <svg className="h-[204px] w-12 shrink-0" viewBox="0 0 48 204" aria-hidden="true">
          <rect x="25.500" y=".5" width="21" height="202" rx="2" fill="#1f2124" stroke="#17181a" />
          {scale.map(([l, y]) => (
            <g key={l}>
              <text x="22" y={y + 4} textAnchor="end" fontSize="11" fontWeight="bold" fill={l === "0" ? "#e8e9ea" : s.sel ? "#c4c6c9" : "#b0b2b4"}>{l}</text>
              <path d={`M29 ${y}h14`} stroke={l === "0" ? "#8e9092" : "#2b4c60"} />
            </g>
          ))}
          <path d="M29 194h14" stroke="#2b4c60" />
          {s.n === 8 && <path d="M29 192h6v6h-6zM37 192h6v6h-6z" fill="#4a9bc4" />}
        </svg>
        <div className="relative w-[34px] shrink-0">
          <svg className="absolute inset-0 h-full w-full" viewBox="0 0 34 204" aria-hidden="true">
            <rect x="7" y="70" width="20" height="132" rx="2" fill="#fff" opacity=".1" />
            <path d="M8 43h18M8 64h18M8 102h18M8 122h18M8 142h18M8 155h18M8 168h18" stroke="#fff" opacity=".15" />
            <rect x="15" y="24" width="4" height="152" rx="1" fill="#1a1b1d" />
          </svg>
          <input
            type="range"
            aria-label={`${s.name} level`}
            min={0}
            max={122}
            defaultValue={122 - s.cap}
            className={`absolute top-6 left-[3px] h-[178px] w-7 appearance-none bg-transparent [direction:rtl] [writing-mode:vertical-lr] [&::-webkit-slider-thumb]:h-14 [&::-webkit-slider-thumb]:w-7 [&::-webkit-slider-thumb]:appearance-none [&::-webkit-slider-thumb]:rounded [&::-webkit-slider-thumb]:border-2 [&::-webkit-slider-thumb]:border-[#35373a] ${
              s.fx
                ? "[&::-webkit-slider-thumb]:bg-[linear-gradient(#7cc3e4_0_3px,#3a7ea3_5px,#57a5cb_40%,#57a5cb_48%,#2b6d90_49%,#2b6d90_52%,#57a5cb_53%,#57a5cb_88%,#2e6f93)]"
                : "[&::-webkit-slider-thumb]:bg-[linear-gradient(#ffffff_0_3px,#8d8d8d_5px,#f4f4f4_38%,#ffffff_48%,#4c4c4c_49%,#4c4c4c_52%,#ffffff_53%,#ffffff_88%,#9a9a9a)]"
            }`}
          />
        </div>
        <div className="flex w-[38px] flex-col items-center justify-between pb-1.5">
          <button aria-label="Channel overview">
            <Svg w={17} h={16}>
              {stack.map((f, i) => <rect key={i} y={i * 6} width="17" height="4" fill={f} />)}
            </Svg>
          </button>
          <button aria-label="Group" className={s.sel ? "text-[#b9bcc0]" : "text-[#939598]"}>
            <Svg w={24} h={24}>
              <circle cx="12" cy="12" r="12" />
              <path d="M7 6h4v12H7q-3-6 0-12zM12.500 6H15v12h-2.500zM16.500 6H18q3 6 0 12h-1.500z" fill="#45474b" />
              <path d="M13.200 7.500h1v9h-1zM17.300 7.500h1v9h-1z" />
            </Svg>
          </button>
        </div>
      </div>
      <div className={`flex h-9 items-center justify-between pt-0.5 pr-3.5 pl-[25px] text-[17px] font-bold ${s.sel ? "text-white" : "text-[#c3c5c7]"}`}>
        {s.n}
        {s.fx ? <span className="text-[20px] leading-5 text-[#97999c]">FX</span> : <WaveIcon />}
      </div>
      <button className={`mx-[11px] h-6 border text-[14px] ${s.auto ? "border-[#6f9a63] bg-[#80a872] text-[#2d4626]" : "border-[#2a2c2f] bg-[#28292b] text-[#6e7073]"}`}>
        {s.auto ?? "オート: オフ"}
      </button>
      <div className="h-2" />
      <div className={`h-[22px] rounded-b-lg text-center text-[17px] leading-[22px] whitespace-nowrap ${s.color} ${s.ink}`}>{s.name}</div>
    </div>
  );
}

function Mixer() {
  return (
    <section className="mt-2 ml-[13px] flex shrink-0 border-b border-black">
      <MixerSide />
      <ChannelList />
      <InstrumentPanel />
      <div className="flex min-w-0 flex-1 flex-col bg-[#25272b]">
        <div className="grid w-[1042px] grid-cols-8 gap-x-[3px] bg-[#111315]">
          {strips.map((s) => <ChannelStrip key={s.n} s={s} />)}
        </div>
        <div className="flex h-7 items-center bg-[#25272b] pl-2.5">
          <button aria-label="Scroll left" className="text-[#85878a]"><LeftArrow /></button>
        </div>
      </div>
    </section>
  );
}

/* ---------- transport ---------- */

function Two({ a, b, className = "" }: { a: React.ReactNode; b: React.ReactNode; className?: string }) {
  return (
    <div className={`flex shrink-0 flex-col whitespace-nowrap ${className}`}>
      <div className="flex h-6 items-center text-[19px] text-[#d6d7d8]">{a}</div>
      <div className="flex h-[22px] items-center text-[15px] text-[#96989b]">{b}</div>
    </div>
  );
}

function Transport() {
  return (
    <footer className="flex h-[68px] shrink-0 bg-[#373a3f] pr-[115px] pb-1.5 pl-[711px]">
      <div className="flex flex-1 items-center bg-[#141414] pt-1 pl-[25px] text-[#c6c8ca] [clip-path:polygon(0_0,100%_0,calc(100%-19px)_100%,14px_100%)]">
        <Two
          className="w-[42px] items-center"
          a={
            <Svg w={40} h={22}>
              <path d="M0 5v12l6-6z" fill="#4f6472" /><path d="M34 5v12l6-6z" fill="#e07a35" />
              <circle cx="20" cy="11" r="10" fill="none" stroke="#68787f" strokeWidth="2" />
              <g fill="#68787f"><circle cx="14" cy="12" r="1.500" /><circle cx="16" cy="7.500" r="1.500" /><circle cx="20" cy="6" r="1.500" /><circle cx="24" cy="7.500" r="1.500" /><circle cx="26" cy="12" r="1.500" /><path d="M17 16h6v4h-6z" /></g>
            </Svg>
          }
          b={<span>MIDI</span>}
        />
        <Two
          className="w-[128px] items-center"
          a={
            <Svg w={98} h={18}>
              <path d="M0 0h98v8H0zM0 10h98v8H0z" fill="#2b2f33" /><path d="M0 0h23v8H0z" fill="#5aa9cc" /><path d="M90 0h8v8h-8zM90 10h8v8h-8z" fill="#222528" />
            </Svg>
          }
          b={<span className="text-[13px]">パフォーマンス</span>}
        />
        <Svg w={36} h={36} className="mx-[9px] text-[#a6a8aa]">
          {Array.from({ length: 14 }, (_, i) => (
            <circle key={i} cx={18 + 15 * Math.cos((i * Math.PI) / 7)} cy={18 + 15 * Math.sin((i * Math.PI) / 7)} r="2" />
          ))}
        </Svg>
        <Two className="ml-2.5 w-[103px]" a="44.1 kHz" b={<span className="text-[17px] text-[#d6d7d8]">46.1 ms</span>} />
        <Two className="w-[132px]" a="11:20 日" b="最大録音時間" />
        <Two className="w-[112px] items-end" a={<span className="text-[#a2a4a6]">00:01:10.586</span>} b={<button className="mr-3 flex items-center gap-2.5">秒<Down w={12} h={8} /></button>} />
        <Two
          className="ml-[43px] w-[200px] items-center"
          a={<span className="text-[28px] leading-6 font-bold text-[#cfd0d1]">00036.02.01.69</span>}
          b={<button className="ml-9 flex items-center gap-2.5">小節<Down w={12} h={8} /></button>}
        />
        <div className="ml-[30px] flex w-[177px] items-center justify-between">
          <button aria-label="Back"><Svg w={17} h={19}><path d="M17 0v19L0 9.500z" /></Svg></button>
          <button aria-label="Rewind"><Svg w={28} h={19}><path d="M16 0v19L0 9.500zM28 0v19L12 9.500z" /></Svg></button>
          <button aria-label="Forward"><Svg w={28} h={19}><path d="M0 0v19l16-9.500zM12 0v19l16-9.500z" /></Svg></button>
          <button aria-label="Next"><Svg w={17} h={19}><path d="M0 0v19l17-9.500z" /></Svg></button>
          <button aria-label="To start"><Svg w={19} h={20}><path d="M0 0h3v20H0zM19 0v20L4 10z" /></Svg></button>
        </div>
        <div className="ml-[30px] flex w-[208px] items-center justify-between">
          <button aria-label="Stop" className="text-[#2fb1d9]"><Svg w={30} h={30}><path d="M0 0h30v30H0z" /></Svg></button>
          <button aria-label="Play"><Svg w={27} h={30}><path d="M0 0v30l27-15z" /></Svg></button>
          <button aria-label="Record"><Dot s={30} /></button>
          <button aria-label="Loop"><Svg w={48} h={32}><path d="M18 29h-3Q2 28 2 16T15 3h18q13 0 13 13T33 29h-8l4-12M15 29l7-12" fill="none" stroke="#a3a5a7" strokeWidth="3.500" strokeLinejoin="round" /></Svg></button>
        </div>
        <div className="ml-7 flex items-center">
          <div className="flex w-[13px] flex-col text-[17px] leading-6 font-bold text-[#3d7ea0]"><span>L</span><span>R</span></div>
          <Svg w={6} h={28} className="mx-1.5"><path d="M0 1h4v26H0" fill="none" stroke="#4a4c4f" strokeWidth="2" /></Svg>
          <div className="flex w-[141px] flex-col text-[19px] leading-[22px] text-[#d6d7d8]"><span>00046.02.04.39</span><span>00056.03.02.21</span></div>
        </div>
        <Two className="ml-[22px] w-[54px] items-center" a={<span className="text-[16px]">オフ</span>} b="同期" />
        <div className="ml-3.5 grid w-[64px] grid-cols-2 items-center gap-y-2 text-[#8e9092]">
          <button aria-label="Pre-roll"><Svg w={24} h={14}><path d="M0 2h8l8 9h8" fill="none" stroke="currentColor" strokeWidth="2.200" /></Svg></button>
          <button aria-label="Punch in" className="ml-2"><Svg w={22} h={15}><path d="M0 0h2v15H0zM6 2h2v11H6zM0 7h22v2H0zM10 3h10v9H10z" /></Svg></button>
          <button aria-label="Precount"><Svg w={20} h={18}><circle cx="10" cy="9" r="5" fill="none" stroke="currentColor" strokeWidth="4" /><path d="M10 0v18M1 9h18M4 3l12 12M16 3L4 15" stroke="currentColor" strokeWidth="2" /><circle cx="10" cy="9" r="3" fill="#141414" /></Svg></button>
          <button aria-label="Punch out" className="ml-2"><Svg w={24} h={12}><path d="M4 0h2v12H4zM18 0h2v12h-2zM0 6h24v1H0zM7 2h10v8H7z" /></Svg></button>
        </div>
        <Two
          className="ml-5 w-[80px] items-center"
          a={<div className="flex w-[76px] items-center justify-between text-[#8e9092]"><Dot s={14} /><Wrench s={16} /><Svg w={18} h={16}><path d="M6 0h4l6 16H0zM16 2L7 13" stroke="currentColor" strokeWidth="1.500" /></Svg></div>}
          b={<span className="text-[13px]">メトロノーム</span>}
        />
        <Two className="ml-[26px] w-[50px] items-center" a={<span>4 / 4</span>} b="拍子" />
        <Two className="ml-[18px] w-[50px] items-center" a="-" b={<span className="text-[13px]">キー</span>} />
        <Two className="ml-4 w-[60px] items-center" a="120.00" b={<span className="text-[13px]">テンポ</span>} />
        <div className="ml-6 flex flex-col gap-3">
          <Svg w={135} h={14}><path d="M0 0h100v6H0zM0 8h100v6H0z" fill="#2b2f33" /><path d="M102 0h33v14h-33z" fill="#202326" /></Svg>
          <div className="flex gap-2.5">
            <Svg w={101} h={14}>
              {Array.from({ length: 34 }, (_, i) => <rect key={i} x={i * 3} width="2" height="14" fill={i < 25 ? "#4a9fc4" : "#303438"} />)}
            </Svg>
            <StereoRings className="text-[#4fb4dc]" />
          </div>
        </div>
      </div>
    </footer>
  );
}

export default function App() {
  return (
    <div className="flex min-h-screen w-full flex-col overflow-hidden bg-[#202326] [font-family:'Liberation_Sans','Noto_Sans_CJK_JP',sans-serif] [font-feature-settings:'palt']">
      <TopBar />
      <section className="mt-1 ml-2 flex flex-1 rounded-l-lg border border-r-0 border-[#3b5a70] pt-[5px] pb-[5px] pl-1">
        <TrackPanel />
        <Timeline />
      </section>
      <Mixer />
      <div className="h-[11px] shrink-0" />
      <Transport />
    </div>
  );
}
